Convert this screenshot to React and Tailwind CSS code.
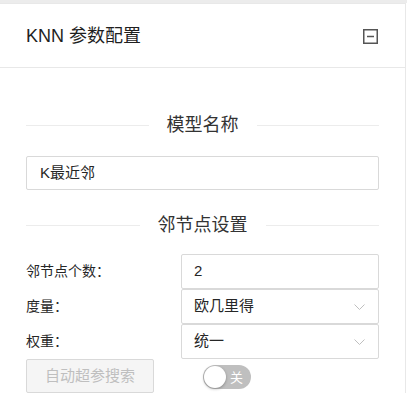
const font = {
  fontFamily: '"Liberation Sans", "Noto Sans CJK SC", sans-serif',
}

function Divider({ children }) {
  return (
    <div className="flex items-center">
      <div className="flex-1 h-px bg-[#ececec]" />
      <span className="px-[18px] text-[18px] leading-[28px] text-[#333]">{children}</span>
      <div className="flex-1 h-px bg-[#ececec]" />
    </div>
  )
}

function Chevron() {
  return (
    <svg width="11" height="6" viewBox="0 0 11 6" fill="none">
      <path d="M0.5 0.5 L5.5 5.5 L10.5 0.5" stroke="#bfbfbf" strokeWidth="1" />
    </svg>
  )
}

function FormRow({ label, children }) {
  return (
    <div className="flex items-center">
      <div className="w-[155px] text-[14px] text-[#262626]">{label}</div>
      <div className="flex-1">{children}</div>
    </div>
  )
}

function Select({ value }) {
  return (
    <div className="h-[35px] border border-[#d9d9d9] rounded-[2px] flex items-center justify-between pl-[12px] pr-[13px] text-[15px] text-[#262626]">
      <span>{value}</span>
      <Chevron />
    </div>
  )
}

export default function App() {
  return (
    <div className="w-[407px] h-[411px] bg-white" style={font}>
      <div className="h-[3px] bg-[#ececec]" />
      <div className="w-[406px] border-t border-r border-[#e8e8e8] bg-white">
        {/* header */}
        <div className="h-[64px] border-b border-[#e8e8e8] flex items-center justify-between pl-[26px] pr-[27px] pt-[2px]">
          <span className="text-[18px] text-[#1f1f1f]">KNN 参数配置</span>
          <svg width="15" height="15" viewBox="0 0 15 15" fill="none">
            <rect x="0.75" y="0.75" width="13.5" height="13.5" stroke="#555" strokeWidth="1.5" />
            <path d="M4 7.5 H11" stroke="#555" strokeWidth="1.5" />
          </svg>
        </div>

        {/* body */}
        <div className="px-[26px] pt-[43px]">
          <Divider>模型名称</Divider>
          <div className="mt-[17px] h-[34px] border border-[#d9d9d9] rounded-[2px] flex items-center px-[13px] text-[15px] text-[#262626]">
            K最近邻
          </div>
          <div className="mt-[21px]">
            <Divider>邻节点设置</Divider>
          </div>
          <div className="mt-[15px] flex flex-col">
            <FormRow label="邻节点个数：">
              <div className="h-[35px] border border-[#d9d9d9] rounded-[2px] flex items-center px-[12px] text-[15px] text-[#262626]">
                2
              </div>
            </FormRow>
            <FormRow label="度量：">
              <Select value="欧几里得" />
            </FormRow>
            <FormRow label="权重：">
              <Select value="统一" />
            </FormRow>
          </div>
          <div className="flex items-center">
            <div className="w-[128px] h-[34px] border border-[#d9d9d9] bg-[#f5f5f5] rounded-[2px] flex items-center justify-center text-[15px] text-[#bfbfbf]">
              自动超参搜索
            </div>
            <div className="ml-[49px] mt-[2px] w-[48px] h-[24px] rounded-full bg-[#bfbfbf] flex items-center relative">
              <div className="absolute left-[1px] top-[1px] w-[22px] h-[22px] rounded-full bg-white shadow-[0_1px_3px_rgba(0,0,0,0.3)]" />
              <span className="ml-[27px] text-[13px] text-white leading-none">关</span>
            </div>
          </div>
        </div>
      </div>
    </div>
  )
}
